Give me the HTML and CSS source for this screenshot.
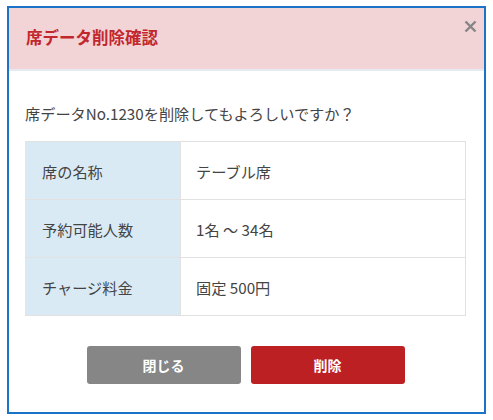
FILE: index.html
```html
<!DOCTYPE html>
<html lang="ja">
<head>
<meta charset="utf-8">
<link rel="stylesheet" href="styles.css">
</head>
<body>
<div class="dialog">
  <div class="header">
    <h1 class="title">席データ削除確認</h1>
    <svg class="close" width="13" height="13" viewBox="0 0 13 13"><path d="M1.5 1.5 L11.5 11.5 M11.5 1.5 L1.5 11.5" stroke="#858585" stroke-width="2.4" stroke-linecap="butt"/></svg>
  </div>
  <div class="content">
    <p class="message">席データNo.1230を削除してもよろしいですか？</p>
    <table class="info">
      <tr><th>席の名称</th><td>テーブル席</td></tr>
      <tr><th>予約可能人数</th><td>1名 ～ 34名</td></tr>
      <tr><th>チャージ料金</th><td>固定 500円</td></tr>
    </table>
    <div class="actions">
      <button class="btn btn-close">閉じる</button>
      <button class="btn btn-delete">削除</button>
    </div>
  </div>
</div>
</body>
</html>
```
FILE: styles.css
```css
* { box-sizing: border-box; }
html, body { margin: 0; padding: 0; background: #fff; }
body {
  font-family: "Noto Sans CJK JP", "Noto Sans", sans-serif;
  color: #333;
  padding: 6px 0 0 7px;
}
.dialog {
  width: 479px;
  height: 408px;
  border: 2px solid #1a73c6;
  background: #fff;
  position: relative;
}
.header {
  height: 63px;
  background: #f2d3d6;
  border-bottom: 2px solid #e6e9ef;
  display: flex;
  align-items: center;
  padding-left: 17px;
  padding-bottom: 3px;
}
.title {
  margin: 0;
  font-size: 16.5px;
  font-weight: bold;
  color: #c1272d;
}
.close {
  position: absolute;
  top: 12px;
  right: 7px;
  display: block;
}
.content {
  padding: 0 18px 0 16px;
}
.message {
  margin: 0;
  padding-top: 32px;
  height: 70px;
  font-size: 15.2px;
  line-height: 20px;
  color: #444;
}
.info {
  width: 441px;
  border-collapse: collapse;
  font-size: 15.2px;
}
.info th, .info td {
  height: 58px;
  border: 1px solid #e1e1e1;
  text-align: left;
  font-weight: normal;
  vertical-align: middle;
  color: #444;
}
.info th {
  width: 155px;
  background: #daeaf4;
  padding-left: 16px;
  border-left-color: #daeaf4;
}
.info td {
  padding-left: 15px;
}
.actions {
  display: flex;
  justify-content: center;
  gap: 10px;
  margin-top: 30px;
}
.btn {
  width: 154px;
  height: 38px;
  border: none;
  border-radius: 3px;
  font-family: "Noto Sans CJK JP", "Noto Sans", sans-serif;
  font-size: 14px;
  font-weight: bold;
  color: #fff;
}
.btn-close { background: #868686; }
.btn-delete { background: #bc2023; }
```
